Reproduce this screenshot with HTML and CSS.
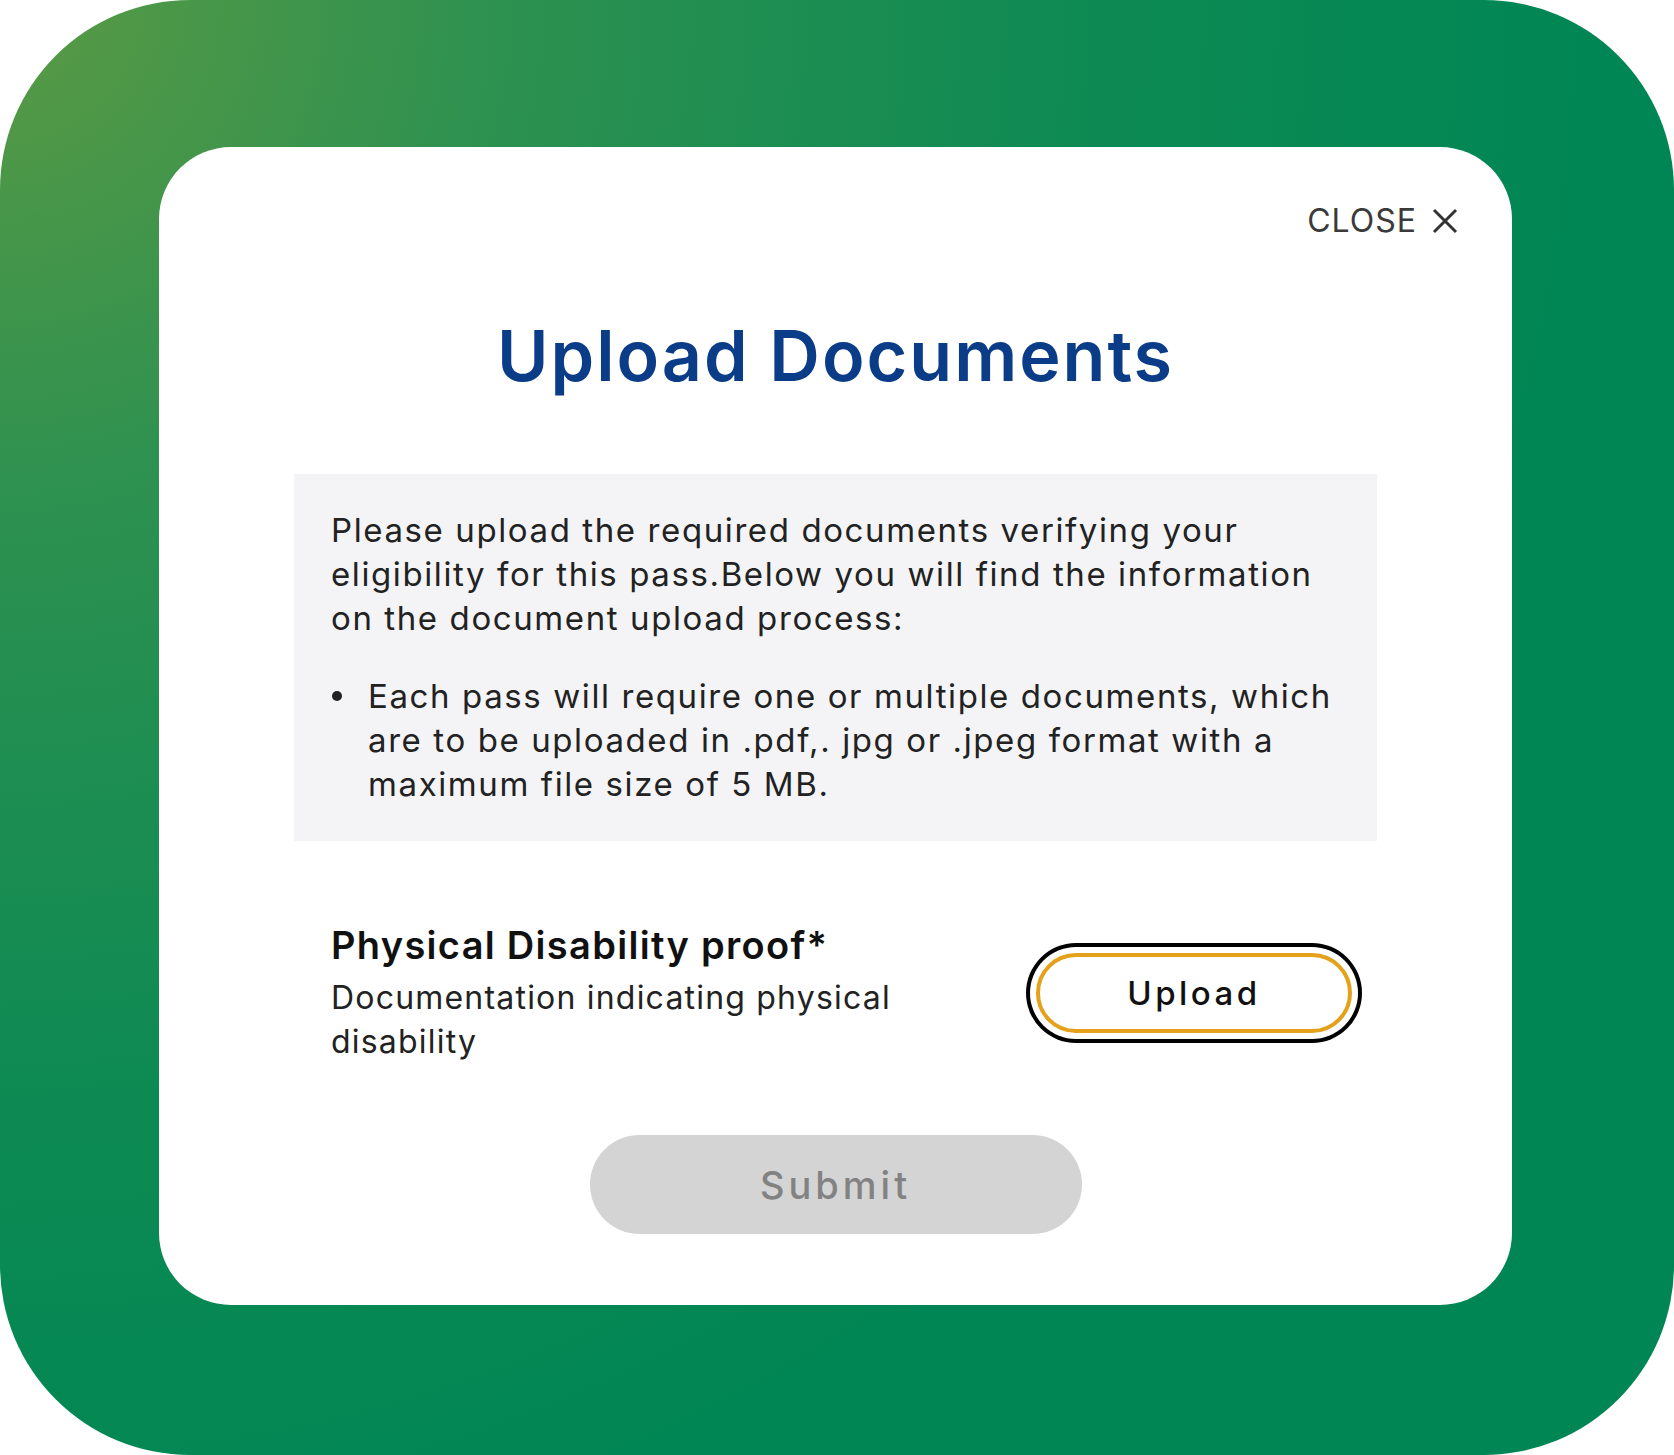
FILE: index.html
```html
<!DOCTYPE html>
<html lang="en">
  <head>
    <meta charset="UTF-8" />
    <meta name="viewport" content="width=device-width, initial-scale=1.0" />
    <title>Upload Documents</title>
    <link rel="stylesheet" href="styles.css">
  </head>
  <body>
    <div class="frame">
      <div class="modal">
        <div class="modal-top">
          <button class="close" type="button">
            CLOSE
            <svg class="close-icon" viewBox="0 0 26 26" width="26" height="26">
              <path d="M2 2 L24 24 M24 2 L2 24" stroke="#333" stroke-width="3" fill="none" />
            </svg>
          </button>
        </div>

        <h1 class="title">Upload Documents</h1>

        <div class="info">
          <p>
            Please upload the required documents verifying your<br />
            eligibility for this pass.Below you will find the information<br />
            on the document upload process:
          </p>
          <ul>
            <li>
              Each pass will require one or multiple documents, which<br />
              are to be uploaded in .pdf,. jpg or .jpeg format with a<br />
              maximum file size of 5 MB.
            </li>
          </ul>
        </div>

        <div class="doc-row">
          <div class="doc-text">
            <div class="doc-name">Physical Disability proof*</div>
            <div class="doc-desc">Documentation indicating physical<br />disability</div>
          </div>
          <button class="upload" type="button">Upload</button>
        </div>

        <div class="actions">
          <button class="submit" type="button" disabled>Submit</button>
        </div>
      </div>
    </div>
  </body>
</html>
```

FILE: styles.css
```css
body {
  margin: 0;
  background: #fff;
  font-family: Inter, "Noto Sans", sans-serif;
  color: #1f1f1f;
}

.frame {
  width: 1674px;
  height: 1455px;
  box-sizing: border-box;
  padding: 147px 162px 150px 159px;
  border-radius: 190px;
  background: radial-gradient(
    circle at 0 0,
    #5a9a44 0,
    #2d9150 500px,
    #0d8a53 1100px,
    #008654 1600px
  );
  display: flex;
  flex-direction: column;
}

.modal {
  flex: 1;
  background: #fff;
  border-radius: 72px;
  padding: 54px 54px 0 54px;
  display: flex;
  flex-direction: column;
}

.modal-top {
  display: flex;
  justify-content: flex-end;
}

.close {
  display: flex;
  align-items: center;
  gap: 15px;
  background: none;
  border: 0;
  padding: 0;
  font-family: inherit;
  font-size: 32px;
  letter-spacing: 1px;
  color: #3a3a3a;
  cursor: pointer;
}

.title {
  margin: 73px 0 0;
  text-align: center;
  font-size: 70px;
  font-weight: 600;
  color: #0a3c88;
  letter-spacing: 2px;
}

.info {
  margin: 76px 81px 0;
  background: #f4f4f6;
  padding: 34px 37px 35px;
  font-size: 33px;
  line-height: 44px;
  color: #222;
  letter-spacing: 1.6px;
}

.info p {
  margin: 0;
}

.info ul {
  list-style: none;
  margin: 34px 0 0;
  padding: 0 0 0 37px;
}

.info li {
  position: relative;
}

.info li::before {
  content: "";
  position: absolute;
  left: -36px;
  top: 17px;
  width: 10px;
  height: 10px;
  border-radius: 50%;
  background: #222;
}

.doc-row {
  margin: 80px 81px 0;
  padding: 0 25px 0 37px;
  display: flex;
  align-items: center;
  justify-content: space-between;
}

.doc-name {
  font-size: 38px;
  font-weight: 600;
  color: #111;
  line-height: 48px;
  letter-spacing: 1.3px;
}

.doc-desc {
  margin-top: 7px;
  font-size: 32px;
  line-height: 44px;
  color: #222;
  letter-spacing: 1.2px;
}

.upload {
  width: 316px;
  height: 80px;
  border: 4px solid #e4a11b;
  border-radius: 40px;
  background: #fff;
  box-shadow: 0 0 0 6px #fff, 0 0 0 10px #000;
  font-family: inherit;
  font-size: 33px;
  font-weight: 500;
  letter-spacing: 3.5px;
  color: #111;
  cursor: pointer;
}

.actions {
  margin-top: 71px;
  display: flex;
  justify-content: center;
}

.submit {
  width: 492px;
  height: 99px;
  border: 0;
  border-radius: 50px;
  background: #d4d4d4;
  font-family: inherit;
  font-size: 38px;
  font-weight: 500;
  letter-spacing: 4px;
  color: #828282;
}
```
